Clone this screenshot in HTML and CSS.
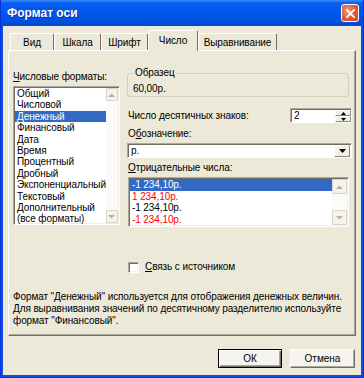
FILE: index.html
```html
<!DOCTYPE html>
<html lang="ru">
<head>
  <meta charset="UTF-8"/>
  <title>Формат оси</title>
  <link rel="stylesheet" href="styles.css">
</head>
<body>
  <div class="window">
    <div class="titlebar">
      <span class="title">Формат оси</span>
      <button class="close-btn">
        <svg viewBox="0 0 10 10" width="9" height="9"><path d="M1 1L9 9M9 1L1 9" stroke="#fff" stroke-width="2" stroke-linecap="square"/></svg>
      </button>
    </div>

    <div class="client">
      <div class="tabs">
        <div class="tab tab-vid">Вид</div>
        <div class="tab tab-scale">Шкала</div>
        <div class="tab tab-font">Шрифт</div>
        <div class="tab tab-num active">Число</div>
        <div class="tab tab-align">Выравнивание</div>
      </div>

      <div class="panel">
        <div class="columns">
          <div class="col-left">
            <div class="label"><u>Ч</u>исловые форматы:</div>
            <div class="listbox formats">
              <ul class="items">
                <li>Общий</li>
                <li>Числовой</li>
                <li class="selected">Денежный</li>
                <li>Финансовый</li>
                <li>Дата</li>
                <li>Время</li>
                <li>Процентный</li>
                <li>Дробный</li>
                <li>Экспоненциальный</li>
                <li>Текстовый</li>
                <li>Дополнительный</li>
                <li>(все форматы)</li>
              </ul>
              <div class="vscroll">
                <span class="sb-btn"><svg viewBox="0 0 7 4" width="7" height="4"><path d="M0 4L3.5 0.5L7 4Z" fill="#b5b2a4"/></svg></span>
                <span class="sb-track"></span>
                <span class="sb-btn"><svg viewBox="0 0 7 4" width="7" height="4"><path d="M0 0L3.5 3.5L7 0Z" fill="#b5b2a4"/></svg></span>
              </div>
            </div>
          </div>

          <div class="col-right">
            <fieldset class="sample">
              <legend>Образец</legend>
              <div class="sample-value">60,00р.</div>
            </fieldset>

            <div class="decimals">
              <span class="label">Число <u>д</u>есятичных знаков:</span>
              <div class="spin">
                <span class="spin-value">2</span>
                <div class="spin-btns">
                  <span class="spin-btn"><svg viewBox="0 0 5 3" width="5" height="3"><path d="M0 3L2.5 0L5 3Z" fill="#000"/></svg></span>
                  <span class="spin-btn"><svg viewBox="0 0 5 3" width="5" height="3"><path d="M0 0L2.5 3L5 0Z" fill="#000"/></svg></span>
                </div>
              </div>
            </div>

            <div class="label symbol-label">О<u>б</u>означение:</div>
            <div class="combo">
              <span class="combo-value">р.</span>
              <span class="combo-btn"><svg viewBox="0 0 7 4" width="7" height="4"><path d="M0 0L3.5 4L7 0Z" fill="#000"/></svg></span>
            </div>

            <div class="label neg-label"><u>О</u>трицательные числа:</div>
            <div class="listbox negatives">
              <ul class="items">
                <li class="selected">-1 234,10р.</li>
                <li class="red">1 234,10р.</li>
                <li>-1 234,10р.</li>
                <li class="red">-1 234,10р.</li>
              </ul>
              <div class="vscroll">
                <span class="sb-btn"><svg viewBox="0 0 7 4" width="7" height="4"><path d="M0 4L3.5 0.5L7 4Z" fill="#b5b2a4"/></svg></span>
                <span class="sb-track"></span>
                <span class="sb-btn"><svg viewBox="0 0 7 4" width="7" height="4"><path d="M0 0L3.5 3.5L7 0Z" fill="#b5b2a4"/></svg></span>
              </div>
            </div>

            <div class="link-row">
              <span class="checkbox"></span>
              <span><u>С</u>вязь с источником</span>
            </div>
          </div>
        </div>

        <p class="desc">Формат "Денежный" используется для отображения денежных величин.<br>Для выравнивания значений по десятичному разделителю используйте<br>формат "Финансовый".</p>
      </div>

      <div class="buttons">
        <button class="btn btn-default">ОК</button>
        <button class="btn">Отмена</button>
      </div>
    </div>
  </div>
</body>
</html>
```
FILE: styles.css
```css
/* ===== Global ===== */
* { margin: 0; padding: 0; box-sizing: border-box; }
body {
  width: 364px;
  height: 378px;
  overflow: hidden;
  font-family: 'Liberation Sans', Arial, sans-serif;
  font-size: 10px;
  letter-spacing: -0.1px;
  color: #000;
  background: #fff;
}
u { text-decoration: underline; text-underline-offset: 1px; }

/* ===== Window frame ===== */
.window {
  width: 364px;
  height: 378px;
  display: flex;
  flex-direction: column;
  background: #0a4fe0;
  border-left: 1px solid #0831d9;
  border-right: 1px solid #0831d9;
  border-bottom: 1px solid #0831d9;
}
.titlebar {
  height: 26px;
  flex: none;
  display: flex;
  align-items: center;
  justify-content: space-between;
  padding: 0 4px 0 6px;
  background: linear-gradient(#3d8dfb 0, #0a5fef 3px, #0058ee 40%, #0054e3 70%, #0049d0 100%);
}
.title {
  color: #fff;
  font-weight: bold;
  font-size: 12px;
  letter-spacing: 0;
  text-shadow: 1px 1px #0a2a9a;
}
.close-btn {
  width: 18px;
  height: 18px;
  display: flex;
  align-items: center;
  justify-content: center;
  border: 1px solid #fff;
  border-radius: 3px;
  background: radial-gradient(circle at 35% 35%, #f39a7d 0, #e2582f 55%, #c8401c 100%);
}

/* ===== Client area ===== */
.client {
  flex: 1;
  margin: 0 2px 2px;
  padding: 0 5px;
  display: flex;
  flex-direction: column;
  background: #ece9d8;
}

/* ===== Tabs ===== */
.tabs {
  height: 24px;
  display: flex;
  align-items: flex-end;
  padding-left: 2px;
  position: relative;
  z-index: 1;
}
.tab {
  height: 17px;
  line-height: 17px;
  text-align: center;
  background: #ece9d8;
  border: 1px solid;
  border-color: #fff #716f64 transparent #fff;
  border-bottom: none;
  border-radius: 2px 2px 0 0;
}
.tab-vid { width: 44px; }
.tab-scale { width: 47px; }
.tab-font { width: 47px; }
.tab-num { width: 50px; }
.tab-align { width: 79px; }
.tab.active {
  height: 21px;
  line-height: 19px;
  margin-bottom: -1px;
}

/* ===== Tab panel ===== */
.panel {
  height: 286px;
  flex: none;
  padding: 0 3px 0 4px;
  border: 1px solid;
  border-color: #fff #716f64 #716f64 #fff;
  box-shadow: inset -1px -1px #aca899;
}
.columns {
  display: grid;
  grid-template-columns: 107px 1fr;
  column-gap: 7px;
  align-items: start;
}
.label { line-height: 12px; }

/* listbox */
.listbox {
  display: flex;
  background: #fff;
  border: 1px solid;
  border-color: #aca899 #fff #fff #aca899;
  box-shadow: inset 1px 1px #716f64, inset -1px -1px #f1efe2;
  padding: 1px;
}
.listbox .items {
  list-style: none;
  flex: 1;
}
.listbox .items li {
  height: 11.4px;
  line-height: 11.4px;
  padding-left: 2px;
  white-space: nowrap;
}
.listbox .items li.selected { background: #316ac5; color: #fff; }
.listbox .items li.red { color: #f00; }
.vscroll {
  width: 15px;
  display: flex;
  flex-direction: column;
}
.sb-btn {
  height: 13px;
  display: flex;
  align-items: center;
  justify-content: center;
  background: #f4f3ee;
  border: 1px solid #d8d5c8;
  border-radius: 1px;
}
.sb-track { flex: 1; background: #fbfbf9; }

.col-left { margin-top: 20px; }
.formats { margin-top: 3px; height: 139px; }

/* right column */
.sample {
  margin-top: 16px;
  margin-right: 3px;
  padding: 4px 5px 1px;
  border: 1px solid #d0d0bf;
  border-radius: 3px;
}
.sample legend {
  line-height: 12px;
  padding: 0 1px;
  margin-left: 1px;
}
.sample-value { line-height: 12px; }

.decimals {
  margin-top: 11px;
  display: flex;
  justify-content: space-between;
  align-items: center;
  padding-left: 1px;
}
.spin {
  width: 62px;
  height: 15px;
  display: flex;
  background: #fff;
  border: 1px solid;
  border-color: #aca899 #fff #fff #aca899;
  box-shadow: inset 1px 1px #716f64;
}
.spin-value { flex: 1; padding: 1px 0 0 3px; line-height: 12px; }
.spin-btns {
  width: 16px;
  display: flex;
  flex-direction: column;
  padding: 1px 0 0 0;
}
.spin-btn {
  flex: 1;
  display: flex;
  align-items: center;
  justify-content: center;
  background: #f0efe8;
  border: 1px solid;
  border-color: #fff #8c8a7e #8c8a7e #fff;
}

.symbol-label { margin-top: 5px; padding-left: 1px; }
.combo {
  margin-top: 3px;
  height: 15px;
  display: flex;
  background: #fff;
  border: 1px solid;
  border-color: #aca899 #fff #fff #aca899;
  box-shadow: inset 1px 1px #716f64;
}
.combo-value { flex: 1; padding: 1px 0 0 3px; line-height: 12px; }
.combo-btn {
  width: 16px;
  margin: 1px 1px 0 0;
  display: flex;
  align-items: center;
  justify-content: center;
  background: #f0efe8;
  border: 1px solid;
  border-color: #fff #8c8a7e #8c8a7e #fff;
}

.neg-label { margin-top: 4px; padding-left: 1px; }
.negatives {
  margin: 3px 3px 0 1px;
  height: 50px;
}
.negatives .items li { height: 11.5px; line-height: 11.5px; }
.negatives .sb-btn { height: 15px; }

.link-row {
  margin-top: 34px;
  display: flex;
  align-items: center;
  gap: 6px;
  padding-left: 1px;
  line-height: 12px;
}
.checkbox {
  width: 11px;
  height: 11px;
  background: #fff;
  border: 1px solid;
  border-color: #aca899 #fff #fff #aca899;
  box-shadow: inset 1px 1px #716f64, inset -1px -1px #f1efe2;
}

.desc {
  margin-top: 18px;
  line-height: 12px;
}

/* ===== Bottom buttons ===== */
.buttons {
  margin-top: 13px;
  display: flex;
  justify-content: flex-end;
  gap: 8px;
  padding-right: 1px;
}
.btn {
  width: 65px;
  height: 19px;
  font-family: inherit;
  font-size: 10px;
  background: #f5f4ef;
  border: 1px solid;
  border-color: #fff #716f64 #716f64 #fff;
  box-shadow: inset -1px -1px #aca899;
}
.btn-default {
  width: 64px;
  border: 1px solid #000;
  box-shadow: inset 1px 1px #fff, inset -1px -1px #716f64, inset -2px -2px #aca899;
}
```
